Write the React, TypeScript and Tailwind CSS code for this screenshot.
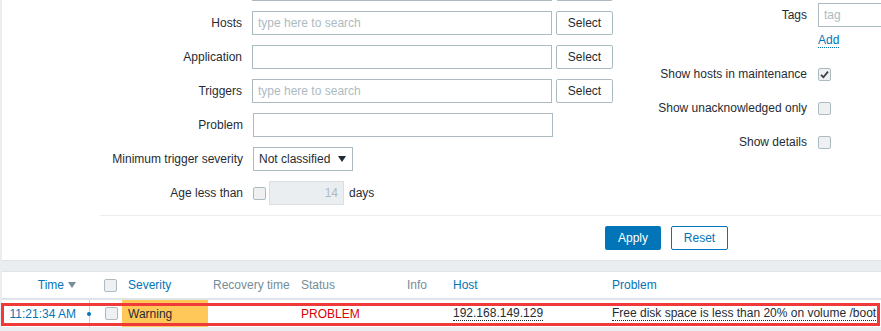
import React from "react";

const Checkbox = ({ checked = false }: { checked?: boolean }) => (
  <span className="inline-flex w-[13px] h-[13px] items-center justify-center rounded-[2px] border border-[#acbbc2] bg-[#eef0f1] shrink-0">
    {checked && (
      <svg width="9" height="9" viewBox="0 0 9 9">
        <path d="M1 4.8 L3.4 7.2 L8 1.6" stroke="#3a4247" strokeWidth="1.8" fill="none" />
      </svg>
    )}
  </span>
);

const TextInput = ({ placeholder = "" }: { placeholder?: string }) => (
  <div className="w-[300px] h-[24px] border border-[#acbbc2] bg-white px-[5px] flex items-center text-[#acbbc2]">
    {placeholder}
  </div>
);

const SelectButton = ({ label = "Select" }: { label?: string }) => (
  <button className="w-[57px] h-[24px] ml-[4px] border border-[#acbbc2] rounded-[2px] bg-white text-[#1f2c33]">
    {label}
  </button>
);

function FilterRow({ label, children }: { label: string; children: React.ReactNode }) {
  return (
    <div className="flex items-center h-[24px]">
      <div className="w-[241px] text-right pr-0">{label}</div>
      <div className="ml-[10px] flex items-center">{children}</div>
    </div>
  );
}

function RightRow({ label, children }: { label: string; children: React.ReactNode }) {
  return (
    <div className="flex items-center h-[24px]">
      <div className="w-[194px] text-right">{label}</div>
      <div className="ml-[11px] flex items-center">{children}</div>
    </div>
  );
}

function Filter() {
  return (
    <div className="ml-[2px] -mt-[34px] bg-white border-b border-[#dfe4e7] pb-[10px]">
      <div className="flex items-start">
        <div className="w-[611px] pt-[11px] flex flex-col gap-[10px]">
          {/* host groups row, scrolled above the top edge: only its bottom border shows */}
          <FilterRow label="">
            <TextInput />
            <SelectButton label="" />
          </FilterRow>
          <FilterRow label="Hosts">
            <TextInput placeholder="type here to search" />
            <SelectButton />
          </FilterRow>
          <FilterRow label="Application">
            <TextInput />
            <SelectButton />
          </FilterRow>
          <FilterRow label="Triggers">
            <TextInput placeholder="type here to search" />
            <SelectButton />
          </FilterRow>
          <FilterRow label="Problem">
            <TextInput />
          </FilterRow>
          <FilterRow label="Minimum trigger severity">
            <div className="w-[100px] h-[24px] border border-[#acbbc2] bg-white pl-[5px] pr-[6px] flex items-center justify-between">
              <span>Not classified</span>
              <svg width="8" height="6" viewBox="0 0 8 6">
                <path d="M0 0 H8 L4 6 Z" fill="#1f2c33" />
              </svg>
            </div>
          </FilterRow>
          <FilterRow label="Age less than">
            <Checkbox />
            <div className="ml-[3px] w-[75px] h-[24px] border border-[#d9dfe2] bg-[#ebeef0] pr-[5px] flex items-center justify-end text-[#acbbc2]">
              14
            </div>
            <span className="ml-[5px]">days</span>
          </FilterRow>
        </div>
        <div className="pt-[37px] flex flex-col">
          <RightRow label="Tags">
            <div className="w-[120px] h-[24px] border border-[#acbbc2] bg-white px-[5px] flex items-center text-[#acbbc2]">
              tag
            </div>
          </RightRow>
          <div className="ml-[205px] mt-[6px] h-[16px] flex items-start">
            <span className="text-[#0275b8] border-b border-dotted border-[#0275b8] leading-[14px]">Add</span>
          </div>
          <div className="mt-[13px] flex flex-col gap-[10px]">
            <RightRow label="Show hosts in maintenance">
              <Checkbox checked />
            </RightRow>
            <RightRow label="Show unacknowledged only">
              <Checkbox />
            </RightRow>
            <RightRow label="Show details">
              <Checkbox />
            </RightRow>
          </div>
        </div>
      </div>
      <div className="ml-[98px] mt-[10px] h-px bg-[#ebeef0]" />
      <div className="ml-[603px] mt-[10px] flex gap-[10px]">
        <button className="w-[56px] h-[24px] rounded-[2px] bg-[#0275b8] text-white">Apply</button>
        <button className="w-[57px] h-[24px] rounded-[2px] border border-[#0275b8] bg-white text-[#0275b8]">Reset</button>
      </div>
    </div>
  );
}

function ProblemsTable() {
  return (
    <div className="ml-[2px] mt-[10px] bg-white border-t border-[#dfe4e7] relative">
      <div className="flex items-center h-[28px] border-b-2 border-[#dfe4e7]">
        <div className="w-[80px] pr-[6px] flex items-center justify-end text-[#0275b8]">
          Time
          <svg className="ml-[4px]" width="8" height="6" viewBox="0 0 8 6">
            <path d="M0 0 H8 L4 6 Z" fill="#768d99" />
          </svg>
        </div>
        <div className="w-[14px]" />
        <div className="w-[26px] pl-[8px] flex items-center">
          <Checkbox />
        </div>
        <div className="w-[86px] pl-[6px] text-[#0275b8]">Severity</div>
        <div className="w-[88px] pl-[5px] text-[#768d99]">Recovery time</div>
        <div className="w-[106px] pl-[5px] text-[#768d99]">Status</div>
        <div className="w-[46px] pl-[5px] text-[#768d99]">Info</div>
        <div className="w-[159px] pl-[5px] text-[#0275b8]">Host</div>
        <div className="flex-1 pl-[5px] text-[#0275b8]">Problem</div>
      </div>
      <div className="flex items-stretch h-[28px] border-b border-[#ebeef0]">
        <div className="w-[80px] pr-[6px] flex items-center justify-end text-[#0275b8]">11:21:34 AM</div>
        <div className="w-[14px] flex items-center justify-center relative">
          <div className="w-px h-full bg-[#bcd3e6]" />
          <span className="absolute w-[4px] h-[4px] rounded-full bg-[#0275b8] top-[12px] left-[5px]" />
        </div>
        <div className="w-[26px] pl-[9px] flex items-center">
          <Checkbox />
        </div>
        <div className="w-[86px] pl-[6px] flex items-center bg-[#ffc859]">Warning</div>
        <div className="w-[88px]" />
        <div className="w-[106px] pl-[5px] flex items-center text-[#dc0000]">PROBLEM</div>
        <div className="w-[46px]" />
        <div className="w-[159px] pl-[5px] flex items-center">
          <span className="border-b border-dotted border-[#1f2c33] leading-[14px]">192.168.149.129</span>
        </div>
        <div className="flex-1 pl-[5px] flex items-center whitespace-nowrap overflow-hidden">
          <span className="border-b border-dotted border-[#1f2c33] leading-[14px]">
            Free disk space is less than 20% on volume /boot
          </span>
        </div>
      </div>
      {/* red highlight drawn over the row */}
      <div className="absolute left-[-1px] right-[1px] top-[31px] h-[23px] border-[3px] border-[#f03a3a] pointer-events-none" />
    </div>
  );
}

export default function App() {
  return (
    <div className="w-[881px] h-[331px] overflow-hidden bg-[#ebeef0] font-['Liberation_Sans',Arial,sans-serif] text-[12px] text-[#1f2c33]">
      <Filter />
      <ProblemsTable />
    </div>
  );
}
